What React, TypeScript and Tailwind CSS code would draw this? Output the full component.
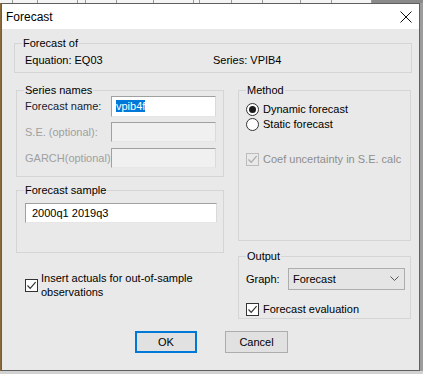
const font = "font-['Liberation_Sans',Arial,sans-serif]";

const GroupBox = ({
  label,
  className,
  children,
}: {
  label: string;
  className?: string;
  children?: React.ReactNode;
}) => (
  <div className={`border border-[#d5d5d5] ${className ?? ""}`}>
    <div className="-mt-[8px] ml-[7px] w-fit bg-[#e9e9e9] px-[1px] leading-[15px]">{label}</div>
    {children}
  </div>
);

const Checkbox = ({ disabled }: { disabled?: boolean }) => (
  <span
    className={`flex h-[13px] w-[13px] shrink-0 items-center justify-center border ${
      disabled ? "border-[#bcbcbc] bg-[#e9e9e9]" : "border-[#333333] bg-white"
    }`}
  >
    <svg width="11" height="11" viewBox="0 0 11 11">
      <path
        d="M1.5 5.5 L4.2 8.3 L9.6 2.2"
        fill="none"
        stroke={disabled ? "#a8a8a8" : "#333333"}
        strokeWidth="1.2"
      />
    </svg>
  </span>
);

const Radio = ({ checked }: { checked?: boolean }) => (
  <span className="flex h-[13px] w-[13px] shrink-0 items-center justify-center rounded-full border border-[#333333] bg-white">
    {checked && <span className="h-[7px] w-[7px] rounded-full bg-[#1a1a1a]" />}
  </span>
);

const TextBox = ({ className, children }: { className?: string; children?: React.ReactNode }) => (
  <div
    className={`flex items-center border border-t-[#a0a0a0] border-l-[#a0a0a0] border-r-[#dadada] border-b-[#e6e6e6] ${className ?? ""}`}
  >
    {children}
  </div>
);

export default function App() {
  return (
    <div className={`${font} h-[374px] w-[423px] overflow-hidden bg-[#d2d2d2] text-[11px] text-black`}>
      {/* app behind the dialog */}
      <div className="flex h-[3px] bg-[#f4f4f4]">
        <div className="w-[13px] border-r border-[#9a9a9a]" />
        <div className="w-[25px] border-r border-[#9a9a9a]" />
        <div className="w-[40px] border-r border-[#9a9a9a]" />
        <div className="w-[8px] border-r border-[#9a9a9a]" />
        <div className="w-[31px] border-r border-[#9a9a9a]" />
        <div className="w-[37px] border-r border-[#9a9a9a]" />
        <div className="w-[40px] border-r border-[#9a9a9a]" />
        <div className="w-[6px] border-r border-[#9a9a9a]" />
        <div className="w-[32px] border-r border-[#9a9a9a]" />
        <div className="w-[31px] border-r border-[#9a9a9a]" />
        <div className="w-[38px] border-r border-[#9a9a9a]" />
        <div className="w-[31px] border-r border-[#9a9a9a]" />
        <div className="w-[40px] border-r border-[#9a9a9a]" />
        <div className="flex-1 bg-[#8a8a8a]" />
      </div>
      <div className="flex">
        <div className="w-[1px] bg-[#8a6a3a]" />
        <div className="flex h-[368px] w-[419px] flex-col border border-[#5f5f5f] bg-[#e9e9e9]">
          {/* title bar */}
          <div className="flex h-[25px] shrink-0 items-center justify-between bg-white pl-[4px] pr-[7px] text-[12px]">
            <span>Forecast</span>
            <svg width="12" height="12" viewBox="0 0 12 12">
              <path d="M0.5 0.5 L11.5 11.5 M11.5 0.5 L0.5 11.5" stroke="#111" strokeWidth="1" />
            </svg>
          </div>

          {/* body */}
          <div className="flex flex-1 flex-col">
            <GroupBox label="Forecast of" className="ml-[12px] mr-[7px] mt-[14px] pb-[4px]">
              <div className="mt-[1px] flex pl-[10px] leading-[16px]">
                <span className="w-[188px]">Equation: EQ03</span>
                <span>Series: VPIB4</span>
              </div>
            </GroupBox>

            <div className="mt-[17px] flex gap-[14px] pl-[14px]">
              {/* left column */}
              <div className="flex w-[208px] flex-col">
                <GroupBox label="Series names" className="pb-[8px]">
                  <div className="-mt-[2px] flex flex-col gap-[6px] pl-[8px]">
                    <div className="flex h-[20px] items-center">
                      <span className="w-[86px] text-[#1a1a2e]">Forecast name:</span>
                      <TextBox className="h-[21px] w-[105px] bg-white pl-[4px]">
                        <span className="bg-[#0078d7] leading-[12px] text-white">vpib4f</span>
                      </TextBox>
                    </div>
                    <div className="flex h-[20px] items-center">
                      <span className="w-[86px] text-[#a0a0a0]">S.E. (optional):</span>
                      <TextBox className="h-[20px] w-[105px] bg-[#f0f0f0]" />
                    </div>
                    <div className="flex h-[20px] items-center">
                      <span className="w-[86px] text-[#a0a0a0]">GARCH(optional):</span>
                      <TextBox className="h-[20px] w-[105px] bg-[#f0f0f0]" />
                    </div>
                  </div>
                </GroupBox>

                <GroupBox label="Forecast sample" className="mt-[13px] pb-[29px]">
                  <TextBox className="ml-[8px] mt-[5px] h-[20px] w-[192px] bg-white pl-[6px]">
                    <span>2000q1 2019q3</span>
                  </TextBox>
                </GroupBox>

                <div className="ml-[9px] mt-[18px] flex items-center gap-[3px]">
                  <Checkbox />
                  <span className="leading-[14px]">
                    Insert actuals for out-of-sample
                    <br />
                    observations
                  </span>
                </div>
              </div>

              {/* right column */}
              <div className="flex w-[173px] flex-col">
                <GroupBox label="Method" className="h-[151px]">
                  <div className="mt-[4px] flex flex-col pl-[7px]">
                    <div className="flex h-[15px] items-center gap-[4px]">
                      <Radio checked />
                      <span>Dynamic forecast</span>
                    </div>
                    <div className="flex h-[15px] items-center gap-[4px]">
                      <Radio />
                      <span>Static forecast</span>
                    </div>
                    <div className="mt-[20px] flex h-[15px] items-center gap-[4px] text-[#8e8e8e]">
                      <Checkbox disabled />
                      <span>Coef uncertainty in S.E. calc</span>
                    </div>
                  </div>
                </GroupBox>

                <GroupBox label="Output" className="mt-[15px] pb-[1px]">
                  <div className="mt-[4px] flex items-center pl-[7px]">
                    <span className="w-[42px]">Graph:</span>
                    <div className="flex h-[22px] w-[117px] items-center justify-between border border-[#adadad] bg-[#e5e5e5] pl-[4px] pr-[5px]">
                      <span>Forecast</span>
                      <svg width="9" height="6" viewBox="0 0 9 6">
                        <path d="M0.5 0.5 L4.5 4.5 L8.5 0.5" fill="none" stroke="#555" strokeWidth="1" />
                      </svg>
                    </div>
                  </div>
                  <div className="mt-[12px] flex h-[15px] items-center gap-[4px] pl-[7px]">
                    <Checkbox />
                    <span>Forecast evaluation</span>
                  </div>
                </GroupBox>
              </div>
            </div>

            <div className="mt-[12px] flex gap-[28px] pl-[133px]">
              <button className="h-[22px] w-[62px] border-2 border-[#0078d7] bg-[#e1e1e1]">OK</button>
              <button className="h-[22px] w-[63px] border border-[#adadad] bg-[#e1e1e1]">Cancel</button>
            </div>
          </div>
        </div>
        <div className="w-[3px] bg-[#9c9c9c]" />
      </div>
    </div>
  );
}
